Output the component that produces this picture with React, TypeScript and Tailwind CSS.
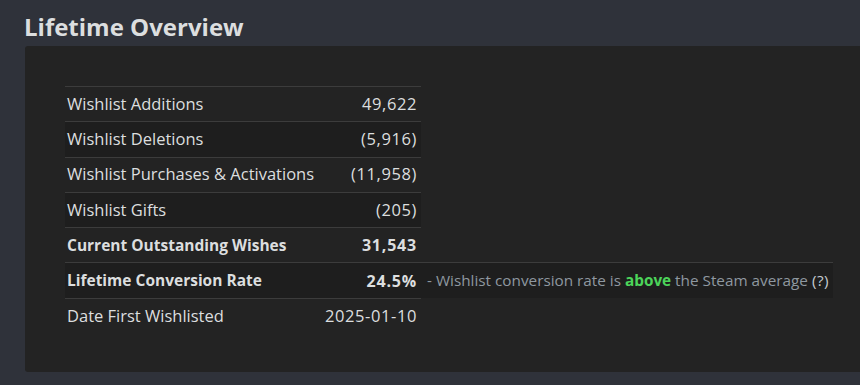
const rows = [
  { label: 'Wishlist Additions', value: '49,622' },
  { label: 'Wishlist Deletions', value: '(5,916)' },
  { label: 'Wishlist Purchases & Activations', value: '(11,958)' },
  { label: 'Wishlist Gifts', value: '(205)' },
  { label: 'Current Outstanding Wishes', value: '31,543', bold: true },
  { label: 'Lifetime Conversion Rate', value: '24.5%', bold: true, note: true },
  { label: 'Date First Wishlisted', value: '2025-01-10', last: true },
];

export default function App() {
  return (
    <div
      className="w-[860px] h-[385px] overflow-hidden bg-[#2f323a] pl-[25px] pt-[10px]"
      style={{ fontFamily: '"Open Sans", "Noto Sans", sans-serif' }}
    >
      {/* Title */}
      <h2 className="text-[24px] leading-[34px] font-bold text-[#dcdedf] -ml-[1px]">Lifetime Overview</h2>

      {/* Panel */}
      <div className="mt-[2px] w-[850px] h-[326px] bg-[#232323] rounded-[3px] pt-[40px] pl-[40px]">
        <div className="flex flex-col">
          {rows.map((row, index) => (
            <div key={index} className="flex h-[35.3px]">
              <div
                className={`flex w-[356px] items-center justify-between pl-[2px] pr-[4px] border-t ${
                  index % 2 === 1 ? 'bg-[#1e1e1e]' : ''
                } border-[#3c3c3c]`}
              >
                <span
                  className={`text-[#dcdedf] ${row.bold ? 'font-bold text-[15.5px]' : 'text-[16.5px]'}`}
                >
                  {row.label}
                </span>
                <span
                  className={`text-[#dcdedf] ${row.bold ? 'font-bold text-[16px] tracking-[0.8px]' : 'text-[16.5px] tracking-[0.6px]'}`}
                >
                  {row.value}
                </span>
              </div>
              {row.note && (
                <div className="flex w-[412px] items-center pl-[6px] border-t border-[#3c3c3c] bg-[#1e1e1e] text-[15.3px] text-[#8f98a0]">
                  <span>
                    - Wishlist conversion rate is <span className="font-bold text-[#4cd45a]">above</span> the Steam average{' '}
                    <span className="text-[#c6ccd2] tracking-[0.5px]">(?)</span>
                  </span>
                </div>
              )}
            </div>
          ))}
        </div>
      </div>
    </div>
  );
}
